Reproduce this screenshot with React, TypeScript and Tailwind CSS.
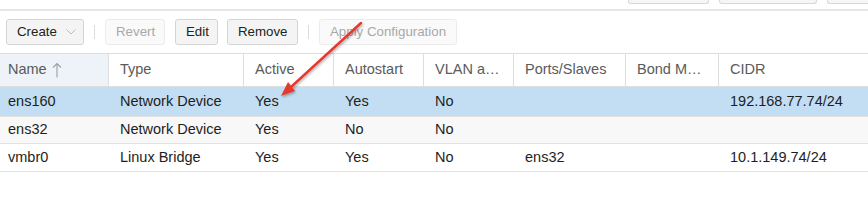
import React from "react";

const COLS = [
  { key: "name", label: "Name", w: "w-[109px]", pad: "pl-[8px]" },
  { key: "type", label: "Type", w: "w-[135px]", pad: "pl-[11px]" },
  { key: "active", label: "Active", w: "w-[90px]", pad: "pl-[11px]" },
  { key: "autostart", label: "Autostart", w: "w-[90px]", pad: "pl-[11px]" },
  { key: "vlan", label: "VLAN a…", w: "w-[90px]", pad: "pl-[11px]" },
  { key: "ports", label: "Ports/Slaves", w: "w-[112px]", pad: "pl-[11px]" },
  { key: "bond", label: "Bond M…", w: "w-[93px]", pad: "pl-[11px]" },
  { key: "cidr", label: "CIDR", w: "flex-1", pad: "pl-[11px]" },
] as const;

type Fila = Record<(typeof COLS)[number]["key"], string>;

const FILAS: Fila[] = [
  { name: "ens160", type: "Network Device", active: "Yes", autostart: "Yes", vlan: "No", ports: "", bond: "", cidr: "192.168.77.74/24" },
  { name: "ens32", type: "Network Device", active: "Yes", autostart: "No", vlan: "No", ports: "", bond: "", cidr: "" },
  { name: "vmbr0", type: "Linux Bridge", active: "Yes", autostart: "Yes", vlan: "No", ports: "ens32", bond: "", cidr: "10.1.149.74/24" },
];

const ALTO = ["h-[30px] bg-[#c3ddf2]", "h-[27px] bg-[#f8f8f8]", "h-[28px] bg-white"];

function Boton({ children, ancho, off }: { children: React.ReactNode; ancho: string; off?: boolean }) {
  return (
    <div
      className={`${ancho} h-[26px] flex items-center pl-[10px] rounded-[3px] border text-[13.3px] ${
        off ? "border-[#ebebeb] bg-[#fafafa] text-[#a8a8a8]" : "border-[#d4d4d4] bg-[#f4f4f4] text-[#222]"
      }`}
    >
      {children}
    </div>
  );
}

function Sep() {
  return <div className="w-px h-[14px] bg-[#dcdcdc] mx-[10px]" />;
}

export default function App() {
  return (
    <div className="relative w-[868px] h-[211px] overflow-hidden bg-white font-['Liberation_Sans',Arial,sans-serif]">
      {/* bottom of the header buttons above */}
      <div className="h-[11px] border-b-2 border-[#e6e6e6] flex items-start">
        <div className="ml-[628px] w-[81px] h-[4px] border-x border-b border-[#d8d8d8] rounded-b-[3px] bg-[#f6f6f6]" />
        <div className="ml-[10px] w-[98px] h-[4px] border-x border-b border-[#d8d8d8] rounded-b-[3px] bg-[#f6f6f6]" />
        <div className="ml-[10px] flex-1 h-[4px] border-l border-b border-[#d8d8d8] rounded-bl-[3px] bg-[#f6f6f6]" />
      </div>

      {/* toolbar */}
      <div className="h-[42px] flex items-center pl-[6px]">
        <Boton ancho="w-[78px]">
          <span>Create</span>
          <svg className="ml-[9px]" width="10" height="6" viewBox="0 0 10 6">
            <polyline points="0.5,0.5 5,5 9.5,0.5" fill="none" stroke="#bdbdbd" strokeWidth="1" />
          </svg>
        </Boton>
        <Sep />
        <Boton ancho="w-[60px]" off>
          Revert
        </Boton>
        <div className="w-[10px]" />
        <Boton ancho="w-[43px]">Edit</Boton>
        <div className="w-[9px]" />
        <Boton ancho="w-[71px]">Remove</Boton>
        <Sep />
        <Boton ancho="w-[138px]" off>
          Apply Configuration
        </Boton>
      </div>

      {/* grid */}
      <div className="text-[14.5px]">
        <div className="flex h-[34px] border-t border-b border-[#dedede]">
          {COLS.map((c, i) => (
            <div
              key={c.key}
              className={`${c.w} ${c.pad} flex items-center text-[#5a5a5a] ${
                i < COLS.length - 1 ? "border-r border-[#dedede]" : ""
              } ${i === 0 ? "bg-[#edf3f9]" : ""}`}
            >
              {c.label}
              {i === 0 && (
                <svg className="ml-[5px]" width="10" height="16" viewBox="0 0 10 16">
                  <path d="M5 1.5 V15.5 M1 5.5 L5 1.5 L9 5.5" fill="none" stroke="#a0a0a0" strokeWidth="1.1" />
                </svg>
              )}
            </div>
          ))}
        </div>
        {FILAS.map((f, r) => (
          <div key={f.name} className={`flex ${ALTO[r]} border-b border-[#e2e2e2]`}>
            {COLS.map((c) => (
              <div key={c.key} className={`${c.w} ${c.pad} flex items-center text-[#1e1e1e] whitespace-nowrap`}>
                {f[c.key]}
              </div>
            ))}
          </div>
        ))}
      </div>

      {/* red callout arrow */}
      <svg className="absolute left-0 top-0 pointer-events-none" width="868" height="211">
        <defs>
          <filter id="sombra" x="-20%" y="-20%" width="140%" height="140%">
            <feDropShadow dx="1" dy="1.5" stdDeviation="1" floodColor="#000" floodOpacity="0.3" />
          </filter>
        </defs>
        <g filter="url(#sombra)">
          <line x1="361" y1="23" x2="291" y2="87" stroke="#e8392e" strokeWidth="2.5" strokeLinecap="round" />
          <polygon points="281,96 295,91 288,82" fill="#e8392e" />
        </g>
      </svg>
    </div>
  );
}
